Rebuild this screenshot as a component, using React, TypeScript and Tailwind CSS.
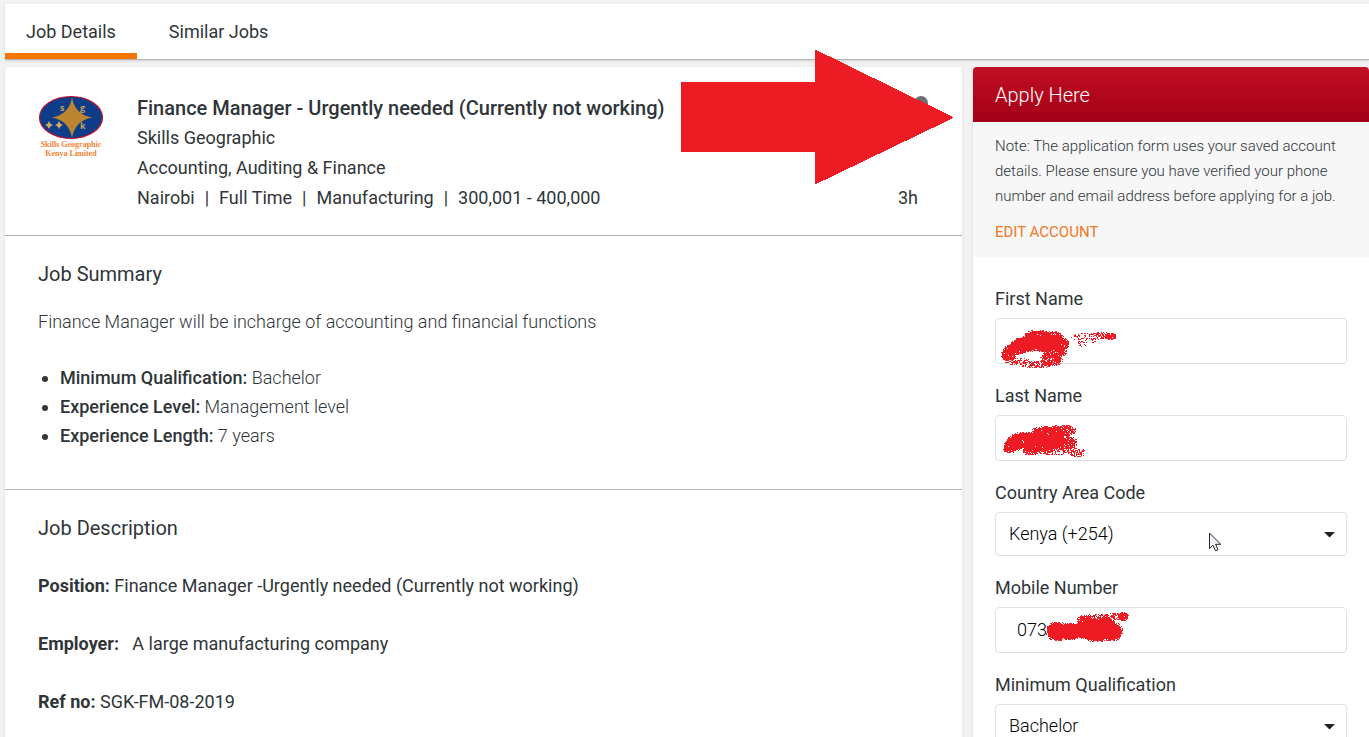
import React from 'react';

const tabs = ['Job Details', 'Similar Jobs'];

const summary = [
  { label: 'Minimum Qualification:', value: 'Bachelor' },
  { label: 'Experience Level:', value: 'Management level' },
  { label: 'Experience Length:', value: '7 years' },
];

const meta = ['Nairobi', 'Full Time', 'Manufacturing', '300,001 - 400,000'];

// [center x, center y, x radius, y radius, fill share]
type Blob = [number, number, number, number, number];

const firstNameInk: Blob[] = [
  [39, 14, 15, 9, 0.98],
  [54, 15, 12, 9, 0.9],
  [26, 20, 14, 8, 0.98],
  [17, 25, 12, 6, 0.97],
  [42, 20, 18, 8, 0.97],
  [60, 20, 11, 8, 0.9],
  [10, 30, 8, 7, 0.95],
  [56, 27, 13, 7, 0.85],
  [18, 37, 14, 4, 0.5],
  [38, 40, 18, 4, 0.55],
  [53, 35, 12, 7, 0.75],
  [89, 12, 20, 4, 0.25],
  [84, 18, 5, 5, 0.35],
  [95, 16, 3, 3, 0.4],
  [106, 11, 11, 4, 0.5],
  [112, 12, 6, 4, 0.9],
];

const lastNameInk: Blob[] = [
  [26, 24, 17, 9, 0.97],
  [15, 28, 10, 7, 0.97],
  [11, 32, 7, 5, 0.95],
  [48, 20, 19, 11, 0.98],
  [64, 14, 14, 6, 0.9],
  [44, 27, 19, 9, 0.98],
  [66, 26, 13, 8, 0.85],
  [32, 34, 9, 5, 0.9],
  [54, 34, 22, 5, 0.5],
  [78, 36, 9, 5, 0.55],
];

const mobileInk: Blob[] = [
  [12, 24, 12, 10, 1],
  [24, 24, 13, 9, 1],
  [38, 23, 14, 9, 1],
  [40, 14, 9, 7, 0.97],
  [51, 24, 15, 11, 1],
  [66, 24, 12, 10, 1],
  [57, 16, 13, 7, 0.97],
  [54, 10, 16, 4, 0.5],
  [70, 9, 14, 4, 0.6],
  [78, 9, 5, 5, 0.95],
];

const sprayPath = (blobs: Blob[]) => {
  let seed = 41;
  const random = () => {
    seed = (seed * 16807) % 2147483647;
    return seed / 2147483647;
  };
  let d = '';
  for (let y = 0; y < 46; y++) {
    for (let x = 0; x < 130; x++) {
      const inside = blobs.some(([cx, cy, rx, ry, fill]) => {
        const dist = Math.hypot((x - cx) / rx, (y - cy) / ry);
        return dist < 1 && random() < fill * (dist > 0.85 ? 0.5 : 1);
      });
      if (inside) d += `M${x} ${y}h1v1h-1z`;
    }
  }
  return d;
};

const Spray = ({ blobs, className }: { blobs: Blob[]; className: string }) => (
  <svg
    className={`pointer-events-none absolute ${className}`}
    width="130"
    height="46"
    shapeRendering="crispEdges"
    aria-hidden="true"
  >
    <path d={sprayPath(blobs)} fill="#ed1c24" />
  </svg>
);

const CompanyLogo = () => (
  <svg width="66" height="66" viewBox="0 0 66 66" className="shrink-0" role="img" aria-label="Skills Geographic Kenya Limited">
    <ellipse cx="33" cy="24.500" rx="31.500" ry="21" fill="#0d3d88" stroke="#c8102e" strokeWidth="1.200" />
    <path d="M34 4.500Q37 21.500 54 24.500Q37 27.500 34 45Q31 27.500 14 24.500Q31 21.500 34 4.500Z" fill="#bd8530" />
    <path d="M11 27.500Q11.500 31 15 32Q11.500 33 11 36.500Q10.500 33 7 32Q10.500 31 11 27.500Z" fill="#d9a860" />
    <path d="M21 27.500Q21.500 31 25 32Q21.500 33 21 36.500Q20.500 33 17 32Q20.500 31 21 27.500Z" fill="#d9a860" />
    <g fill="#c5a05c" fontFamily="Open Sans, sans-serif" fontWeight="700" fontSize="9">
      <text x="22" y="18">s</text>
      <text x="42" y="18">g</text>
      <text x="42" y="36">k</text>
    </g>
    <g fill="#f58232" fontFamily="Liberation Serif, serif" fontWeight="700" fontSize="8" textAnchor="middle">
      <text x="33" y="54">Skills Geographic</text>
      <text x="33" y="63">Kenya Limited</text>
    </g>
  </svg>
);

const TextField = ({
  id,
  label,
  value = '',
  children,
}: {
  id: string;
  label: string;
  value?: string;
  children?: React.ReactNode;
}) => (
  <div>
    <label htmlFor={id} className="block text-[18px] leading-6">{label}</label>
    <div className="relative mt-[7px]">
      <input
        id={id}
        type="text"
        defaultValue={value}
        className="block h-[46px] w-full rounded border border-[#e1e1e1] bg-white px-[21px] pb-[2px] text-[18px] font-light text-black outline-none"
      />
      {children}
    </div>
  </div>
);

const SelectField = ({
  id,
  label,
  value,
  children,
}: {
  id: string;
  label: string;
  value: string;
  children?: React.ReactNode;
}) => (
  <div>
    <label htmlFor={id} className="block text-[18px] leading-6">{label}</label>
    <div className="relative mt-[7px]">
      <select
        id={id}
        defaultValue={value}
        className="block h-11 w-full appearance-none rounded border border-[#e1e1e1] bg-white px-[13px] pb-[2px] text-[18px] font-light text-black outline-none"
      >
        <option>{value}</option>
      </select>
      <svg className="pointer-events-none absolute top-5 right-3" width="11" height="6" aria-hidden="true">
        <path d="M0 0H11L5.500 5.500Z" fill="#222" />
      </svg>
      {children}
    </div>
  </div>
);

const Pointer = () => (
  <svg className="pointer-events-none absolute top-5 right-[125px]" width="13" height="20" aria-hidden="true">
    <path
      d="M.5 1V16.500L4 13.300L6.500 18.800L9 17.700L6.600 12.300H11.700Z"
      fill="#f4f4f8"
      stroke="#23232d"
      strokeWidth="1"
    />
  </svg>
);

const App: React.FC = () => {
  return (
    <div className="h-screen overflow-hidden bg-[#f2f2f2] pt-1 pl-[5px] font-['Roboto',sans-serif] text-[#2f3539]">
      <nav className="flex h-[56px] gap-[11px] border-b border-[#b3b3b3] bg-white shadow-sm">
        {tabs.map((tab, i) => (
          <button
            key={tab}
            type="button"
            className={`border-b-6 px-[21px] pt-[6px] text-[18px] leading-6 ${
              i === 0 ? 'border-[#f57600]' : 'border-transparent'
            }`}
          >
            {tab}
          </button>
        ))}
      </nav>

      <div className="mt-[7px] flex items-start gap-[11px]">
        <main className="relative min-w-0 flex-1 rounded-t-xs bg-white pb-10 shadow">
          {/* Job header */}
          <header className="flex border-b border-[#b3b3b3] pt-[26px] pr-[34px] pb-[22px] pl-[33px]">
            <CompanyLogo />
            <div className="ml-[33px] flex-1 text-[18px] leading-[30px]">
              <h1 className="text-[20px] font-medium">Finance Manager - Urgently needed (Currently not working)</h1>
              <p>Skills Geographic</p>
              <p>Accounting, Auditing &amp; Finance</p>
              <p>
                {meta.map((item, i) => (
                  <React.Fragment key={item}>
                    {i > 0 && <span className="px-[10px]">|</span>}
                    {item}
                  </React.Fragment>
                ))}
              </p>
            </div>
            <div className="flex flex-col items-end justify-between">
              <button type="button" aria-label="Save job" className="mt-[3px] size-[14px] rounded-full bg-[#6b7072]" />
              <span className="pr-[10px] text-[18px] leading-[30px]">3h</span>
            </div>
          </header>

          {/* Job summary */}
          <section className="border-b border-[#b3b3b3] px-[33px] pt-[23px] pb-[39px] text-[18px] leading-[29px]">
            <h2 className="text-[20px] leading-[30px]">Job Summary</h2>
            <p className="mt-[18px] font-light">Finance Manager will be incharge of accounting and financial functions</p>
            <ul className="mt-[27px] list-disc pl-[22px]">
              {summary.map(({ label, value }) => (
                <li key={label} className="font-light">
                  <strong className="font-medium">{label}</strong> {value}
                </li>
              ))}
            </ul>
          </section>

          {/* Job description */}
          <section className="px-[33px] pt-[23px] text-[18px] leading-[29px]">
            <h2 className="text-[20px] leading-[30px]">Job Description</h2>
            <div className="mt-7 space-y-[29px]">
              <p>
                <strong className="font-bold">Position:</strong> Finance Manager -Urgently needed (Currently not working)
              </p>
              <p>
                <strong className="font-bold">Employer:</strong>&nbsp;&nbsp; A large manufacturing company
              </p>
              <p>
                <strong className="font-bold">Ref no:</strong> SGK-FM-08-2019
              </p>
            </div>
          </section>

          <svg
            className="pointer-events-none absolute -top-[17px] right-[9px]"
            width="272"
            height="134"
            shapeRendering="crispEdges"
            aria-hidden="true"
          >
            <path
              d="M1 33H135V1L271 67.500L135 133V101H1Z"
              fill="#ed1c24"
              stroke="#ed1c24"
              strokeWidth="2"
              strokeLinejoin="round"
            />
          </svg>
        </main>

        <aside className="w-[396px] shrink-0 rounded-t bg-white pb-10 shadow">
          <h2 className="rounded-t bg-linear-to-b from-[#c20f23] to-[#a30017] px-[22px] pt-[2px] text-[20px] leading-[53px] font-light text-white">
            Apply Here
          </h2>
          <div className="bg-[#f7f7f7] px-[22px] pt-3 pb-3 text-[15px]">
            <p className="leading-[25px] font-light">
              Note: The application form uses your saved account details. Please ensure you have verified your phone
              number and email address before applying for a job.
            </p>
            <a href="#account" className="mt-[11px] block leading-[25px] text-[#f0781e] uppercase">
              Edit Account
            </a>
          </div>
          <form className="space-y-5 px-[22px] pt-[30px]">
            <TextField id="first-name" label="First Name">
              <Spray blobs={firstNameInk} className="top-[6px] left-[3px]" />
            </TextField>
            <TextField id="last-name" label="Last Name">
              <Spray blobs={lastNameInk} className="top-px left-[3px]" />
            </TextField>
            <SelectField id="area-code" label="Country Area Code" value="Kenya (+254)">
              <Pointer />
            </SelectField>
            <TextField id="mobile" label="Mobile Number" value="073">
              <Spray blobs={mobileInk} className="top-0 left-[50px]" />
            </TextField>
            <SelectField id="qualification" label="Minimum Qualification" value="Bachelor" />
          </form>
        </aside>
      </div>
    </div>
  );
};

export default App;
